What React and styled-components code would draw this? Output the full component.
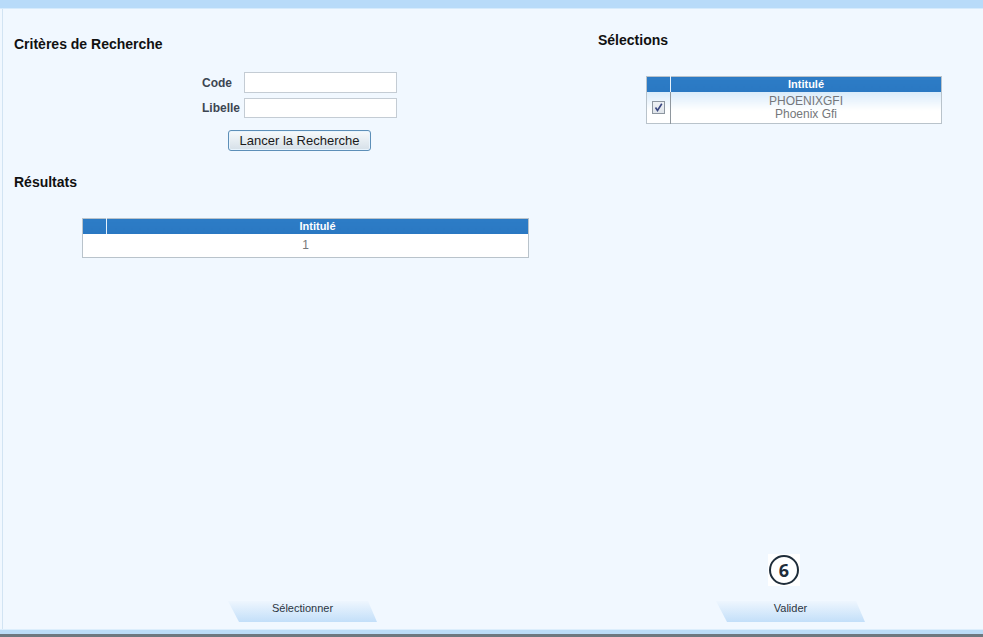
import React from 'react';
import styled, { createGlobalStyle } from 'styled-components';

const GlobalStyle = createGlobalStyle`
  html, body {
    margin: 0;
    padding: 0;
    background: #f1f8ff;
    font-family: "Liberation Sans", Arial, sans-serif;
  }
`;

const Frame = styled.div`
  width: 983px;
  height: 637px;
  display: flex;
  flex-direction: column;
  overflow: hidden;
  background: #f1f8ff;
`;

const TopBand = styled.div`
  height: 8px;
  background: #b8dbf9;
  border-bottom: 1px solid #d6ebfc;
`;

const Main = styled.div`
  flex: 1;
  display: grid;
  grid-template-columns: 584px 1fr;
  margin-left: 2px;
  border-left: 1px solid #d2e4f3;
`;

const Column = styled.div`
  display: flex;
  flex-direction: column;
  padding-left: ${(p) => p.$pad}px;
`;

const Heading = styled.h2`
  margin: ${(p) => p.$top}px 0 0 0;
  font-size: 14px;
  line-height: 16px;
  font-weight: bold;
  color: #111;
`;

const Form = styled.div`
  display: grid;
  grid-template-columns: 42px 153px;
  row-gap: 5px;
  margin: 20px 0 0 188px;
  align-items: center;
`;

const Label = styled.label`
  font-size: 12px;
  font-weight: bold;
  color: #3d4652;
`;

const Input = styled.input`
  box-sizing: border-box;
  width: 153px;
  height: ${(p) => p.$h}px;
  border: 1px solid #c4ccd4;
  background: #fff;
  margin: 0;
  padding: 0 3px;
`;

const SearchButton = styled.button`
  box-sizing: border-box;
  align-self: flex-start;
  margin: 12px 0 0 214px;
  width: 143px;
  height: 21px;
  padding: 0;
  font-family: "Liberation Sans", Arial, sans-serif;
  font-size: 13px;
  color: #1a1a1a;
  border: 1px solid #5d8fb8;
  border-radius: 3px;
  background: linear-gradient(#f6f9fb, #e6edf2 50%, #d6e0e8);
  box-shadow: inset 0 0 0 1px #e8f4fd;
`;

const Table = styled.table`
  border-collapse: collapse;
  width: ${(p) => p.$w}px;
  margin: ${(p) => p.$top}px 0 0 ${(p) => p.$left}px;
  border: 1px solid #b9c3cb;
  font-family: "Liberation Sans", Arial, sans-serif;
`;

const Th = styled.th`
  height: 15px;
  padding: 0;
  background: linear-gradient(#2d7cc6, #2a78c2);
  color: #fff;
  font-size: 11px;
  line-height: 13px;
  font-weight: bold;
  text-align: center;
  border-left: ${(p) => (p.$sep ? '1px solid #e6f2fc' : 'none')};
`;

const Td = styled.td`
  padding: 0;
  height: ${(p) => p.$h}px;
  text-align: center;
  vertical-align: middle;
  font-size: 12px;
  line-height: 13px;
  color: #74777b;
  background: ${(p) => (p.$fade ? 'linear-gradient(#d9ebfa, #ffffff 60%)' : '#fff')};
  border-left: ${(p) => (p.$sep ? '1px solid #8f979e' : 'none')};
`;

const FakeCheck = styled.span`
  display: inline-block;
  box-sizing: border-box;
  width: 13px;
  height: 13px;
  border: 1px solid #8d96a0;
  background: linear-gradient(#eef1f4, #dfe4ea);
  vertical-align: middle;
  line-height: 0;
`;

const Footer = styled.div`
  margin-top: auto;
  display: flex;
  flex-direction: column;
  align-items: flex-start;
  padding-left: ${(p) => p.$left}px;
  padding-bottom: 7px;
`;

const StepBadge = styled.div`
  margin: 0 0 15px 52px;
  width: 32px;
  height: 32px;
  background: #fff;
  display: flex;
  align-items: center;
  justify-content: center;
`;

const Circle = styled.span`
  box-sizing: border-box;
  width: 30px;
  height: 30px;
  border: 2.5px solid #1f2d3a;
  border-radius: 50%;
  display: flex;
  align-items: center;
  justify-content: center;
  font-size: 18px;
  font-weight: bold;
  color: #1f2d3a;
  font-family: "Open Sans", "Liberation Sans", sans-serif;
`;

const TabButton = styled.button`
  width: 149px;
  height: 21px;
  padding: 0 0 7px 0;
  border: none;
  font-family: "Liberation Sans", Arial, sans-serif;
  font-size: 11px;
  line-height: 14px;
  color: #2b3542;
  background: linear-gradient(#eef6fe, #c3dff9);
  clip-path: polygon(0 0, 140px 0, 149px 21px, 11px 21px);
`;

const BottomBand = styled.div`
  height: 4px;
  background: #bcdcf7;
  border-top: 1px solid #dceefc;
`;

const BottomEdge = styled.div`
  height: 3px;
  background: #6e7880;
`;

function Check() {
  return (
    <FakeCheck>
      <svg width="11" height="11" viewBox="0 0 11 11">
        <path d="M2.5 5.5 L4.5 8.5 L8.8 1.8" fill="none" stroke="#3a4680" strokeWidth="1.6" />
      </svg>
    </FakeCheck>
  );
}

export default function App() {
  return (
    <>
      <GlobalStyle />
      <Frame>
        <TopBand />
        <Main>
          <Column $pad={11}>
            <Heading $top={27}>Critères de Recherche</Heading>
            <Form>
              <Label>Code</Label>
              <Input $h={21} />
              <Label>Libelle</Label>
              <Input $h={20} />
            </Form>
            <SearchButton>Lancer la Recherche</SearchButton>
            <Heading $top={23}>Résultats</Heading>
            <Table $w={447} $top={28} $left={68}>
              <thead>
                <tr>
                  <Th style={{ width: 23 }} />
                  <Th $sep>Intitulé</Th>
                </tr>
              </thead>
              <tbody>
                <tr>
                  <Td $h={23} colSpan={2}>1</Td>
                </tr>
              </tbody>
            </Table>
            <Footer $left={214}>
              <TabButton>Sélectionner</TabButton>
            </Footer>
          </Column>
          <Column $pad={11}>
            <Heading $top={23}>Sélections</Heading>
            <Table $w={296} $top={28} $left={48}>
              <thead>
                <tr>
                  <Th style={{ width: 23 }} />
                  <Th $sep>Intitulé</Th>
                </tr>
              </thead>
              <tbody>
                <tr>
                  <Td $h={31} $fade>
                    <Check />
                  </Td>
                  <Td $h={31} $fade $sep>
                    PHOENIXGFI
                    <br />
                    Phoenix Gfi
                  </Td>
                </tr>
              </tbody>
            </Table>
            <Footer $left={118}>
              <StepBadge>
                <Circle>6</Circle>
              </StepBadge>
              <TabButton>Valider</TabButton>
            </Footer>
          </Column>
        </Main>
        <BottomBand />
        <BottomEdge />
      </Frame>
    </>
  );
}
